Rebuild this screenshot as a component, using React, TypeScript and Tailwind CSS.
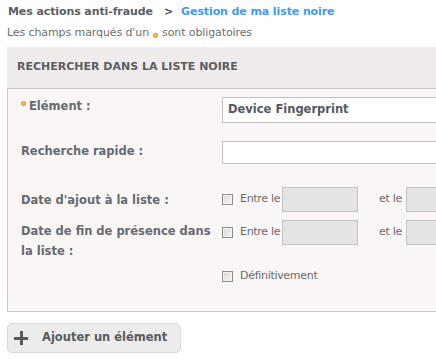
import React from "react";

function Checkbox() {
  return (
    <span className="inline-block w-[11px] h-[11px] shrink-0 border border-[#8c8c8c] bg-[linear-gradient(135deg,#d8d8d8,#f6f6f6)] shadow-[inset_0_0_0_1px_#f2f2f2]" />
  );
}

function DateRange() {
  return (
    <div className="flex items-center shrink-0 whitespace-nowrap font-normal">
      <div className="flex items-center w-[60px] shrink-0">
        <Checkbox />
        <span className="ml-[7px] text-[11px] text-[#6a6a6a] tracking-[-0.3px] whitespace-nowrap">Entre le</span>
      </div>
      <div className="w-[76px] h-[25px] bg-[#e4e4e4] border border-[#c4c4c4] shrink-0" />
      <span className="ml-[21px] text-[11px] text-[#6a6a6a] tracking-[-0.3px] whitespace-nowrap">et le</span>
      <div className="ml-[4px] w-[76px] h-[25px] bg-[#e4e4e4] border border-[#c4c4c4] shrink-0" />
    </div>
  );
}

export default function App() {
  return (
    <div className="w-[436px] h-[359px] overflow-hidden bg-white font-['DejaVu_Sans',sans-serif] text-[#666]">
      <div className="flex items-center h-[25px] pl-[8px] text-[11px] font-bold whitespace-nowrap">
        <span className="text-[#5b5e63] tracking-[-0.1px]">Mes actions anti-fraude</span>
        <span className="ml-[11px] mr-[8px] text-[#4d5055]">&gt;</span>
        <span className="text-[#3d9bf5] tracking-[-0.1px]">Gestion de ma liste noire</span>
      </div>
      <div className="flex items-center h-[16px] pl-[7px] text-[11px] text-[#6e6e6e] whitespace-nowrap tracking-[-0.1px]">
        <span>Les champs marqués d'un</span>
        <span className="inline-block ml-[4px] mr-[4px] mt-[5px] w-[5px] h-[5px] rounded-full bg-[#f7c33c] border border-[#d68a1c]" />
        <span>sont obligatoires</span>
      </div>

      <div className="ml-[7px] mt-[6px] w-[540px]">
        <div className="h-[42px] bg-[#f0ecec] border-b border-[#c9c9c9] flex items-center pl-[10px] text-[11px] font-bold text-[#5a5d63] whitespace-nowrap">
          RECHERCHER DANS LA LISTE NOIRE
        </div>
        <div className="border-l border-b border-[#cccccc] bg-[#faf6f6] pl-[13px] pt-[8px] pb-[26px] text-[11.5px] font-bold text-[#676a70]">
          <div className="flex h-[26px]">
            <div className="w-[201px] shrink-0 mt-[1px] leading-[16px] flex items-start">
              <span className="inline-block mt-[3px] mr-[3px] w-[5px] h-[5px] rounded-full bg-[#f7c33c] border border-[#d68a1c]" />
              <span>Elément :</span>
            </div>
            <div className="w-[260px] h-[26px] border border-[#c0c0c0] bg-white flex items-center pl-[5px] text-[#555860] whitespace-nowrap shrink-0">
              Device Fingerprint
            </div>
          </div>

          <div className="flex h-[23px] mt-[18px]">
            <div className="w-[201px] shrink-0 mt-[2px] leading-[16px]">Recherche rapide :</div>
            <div className="w-[260px] h-[23px] border border-[#c0c0c0] bg-white shrink-0" />
          </div>

          <div className="flex items-center h-[25px] mt-[23px]">
            <div className="w-[201px] shrink-0 leading-[16px]">Date d'ajout à la liste :</div>
            <DateRange />
          </div>

          <div className="flex items-start mt-[9px]">
            <div className="w-[196px] mr-[5px] shrink-0 leading-[20px]">Date de fin de présence dans la liste :</div>
            <div className="h-[23px] flex items-center shrink-0">
              <DateRange />
            </div>
          </div>

          <div className="flex items-center h-[18px] mt-[6px]">
            <div className="w-[201px] shrink-0" />
            <Checkbox />
            <span className="ml-[7px] text-[11px] font-normal text-[#6a6a6a] tracking-[-0.3px] whitespace-nowrap">Définitivement</span>
          </div>
        </div>
      </div>

      <button className="ml-[7px] mt-[11px] w-[174px] h-[30px] rounded-[5px] bg-[#ececec] border border-[#d8d8d8] flex items-center pl-[6px] text-[11.5px] font-bold text-[#575a5f] whitespace-nowrap">
        <span className="relative w-[14px] h-[14px] mr-[14px] shrink-0">
          <span className="absolute left-0 top-[5.5px] w-[14px] h-[3px] bg-[#5a5a5a]" />
          <span className="absolute left-[5.5px] top-0 w-[3px] h-[14px] bg-[#5a5a5a]" />
        </span>
        Ajouter un élément
      </button>
    </div>
  );
}
